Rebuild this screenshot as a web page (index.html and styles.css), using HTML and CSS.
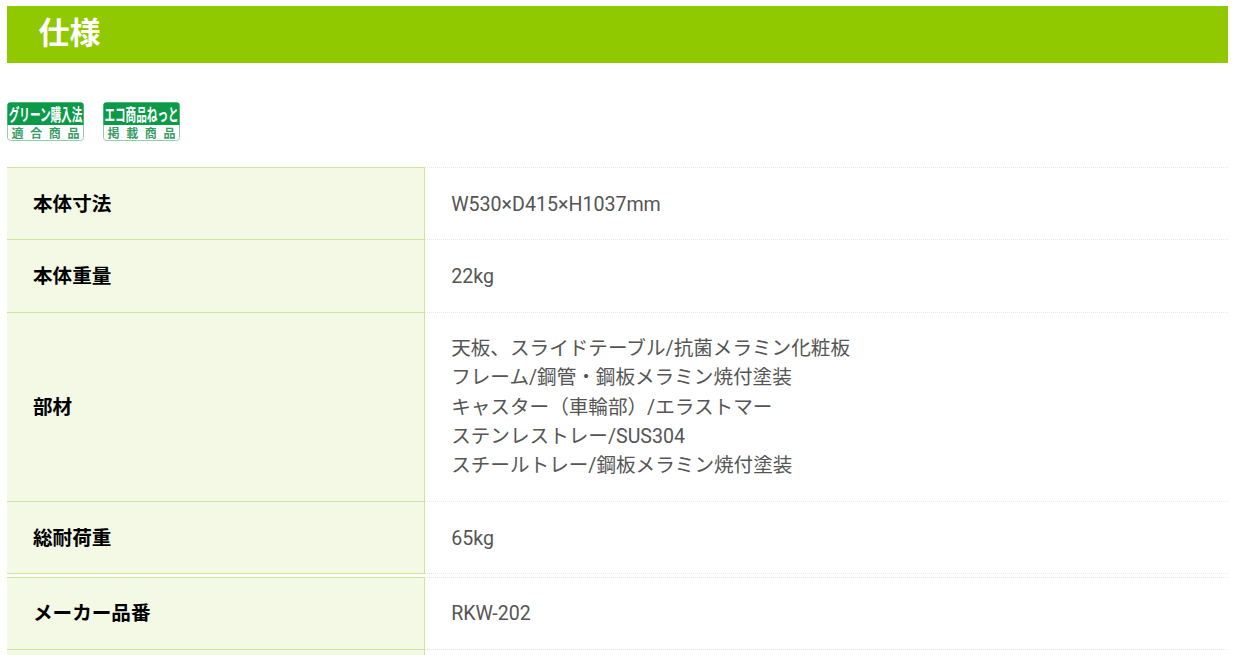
FILE: index.html
```html
<!DOCTYPE html>
<html lang="ja">
<head>
<meta charset="utf-8">
<title>仕様</title>
<link rel="stylesheet" href="styles.css">
</head>
<body>
<h2 class="band">仕様</h2>
<div class="badges">
  <svg class="badge" width="78" height="39" viewBox="0 0 78 39">
    <rect x="0.5" y="0.5" width="76" height="38" rx="3" fill="#fff" stroke="#8fd0a8"/>
    <path d="M3 0.5H74a2.5 2.5 0 0 1 2.5 2.5V23H0.5V3A2.5 2.5 0 0 1 3 0.5Z" fill="#0a9a48"/>
    <text transform="translate(38.5 18.5) scale(1 1.6)" class="b-top">グリーン購入法</text>
    <text x="38.5" y="36" class="b-bot" textLength="68">適合商品</text>
  </svg>
  <svg class="badge" width="78" height="39" viewBox="0 0 78 39">
    <rect x="0.5" y="0.5" width="76" height="38" rx="3" fill="#fff" stroke="#8fd0a8"/>
    <path d="M3 0.5H74a2.5 2.5 0 0 1 2.5 2.5V23H0.5V3A2.5 2.5 0 0 1 3 0.5Z" fill="#0a9a48"/>
    <text transform="translate(38.5 18.5) scale(1 1.6)" class="b-top">エコ商品ねっと</text>
    <text x="38.5" y="36" class="b-bot" textLength="68">掲載商品</text>
  </svg>
</div>
<table class="spec">
  <tr><th>本体寸法</th><td>W530×D415×H1037mm</td></tr>
  <tr><th>本体重量</th><td>22kg</td></tr>
  <tr><th>部材</th><td>天板、スライドテーブル/抗菌メラミン化粧板<br>フレーム/鋼管・鋼板メラミン焼付塗装<br>キャスター（車輪部）/エラストマー<br>ステンレストレー/SUS304<br>スチールトレー/鋼板メラミン焼付塗装</td></tr>
  <tr><th>総耐荷重</th><td>65kg</td></tr>
</table>
<table class="spec spec-next">
  <tr><th>メーカー品番</th><td>RKW-202</td></tr>
  <tr><th>&nbsp;</th><td>&nbsp;</td></tr>
</table>
</body>
</html>
```
FILE: styles.css
```css
html, body { margin: 0; padding: 0; }
html { overflow: hidden; height: 655px; }
body {
  padding: 6px 7px 0;
  background: #fff;
  font-family: Roboto, "Noto Sans CJK JP", sans-serif;
  font-size: 19.6px;
  line-height: 29.3px;
  color: #555;
}
.band {
  margin: 0;
  height: 57px;
  padding-left: 31.5px;
  background: #90c900;
  color: #fff;
  font-family: "Liberation Sans", "Noto Sans CJK JP", sans-serif;
  font-size: 31px;
  font-weight: bold;
  line-height: 56px;
}
.badges {
  display: flex;
  gap: 18px;
  margin-top: 39px;
  height: 39px;
}
.badge { display: block; }
.b-top {
  font-family: "Noto Sans CJK JP", sans-serif;
  font-size: 10.6px;
  font-weight: bold;
  fill: #fff;
  text-anchor: middle;
}
.b-bot {
  font-family: "Noto Sans CJK JP", sans-serif;
  font-size: 12px;
  font-weight: bold;
  fill: #3a9c68;
  text-anchor: middle;
}
.spec {
  width: 100%;
  margin-top: 26px;
  border-collapse: collapse;
  table-layout: fixed;
}
.spec-next { margin-top: 3px; }
.spec th, .spec td {
  padding: 21.5px 26px 20.5px;
  vertical-align: middle;
  text-align: left;
}
.spec-next th, .spec-next td {
  padding: 21px 26px 20.5px;
}
.spec th {
  width: 365px;
  background: #f3f9e4;
  border: 1px solid #cfe59a;
  border-left: 0;
  color: #000;
  font-family: "Liberation Sans", "Noto Sans CJK JP", sans-serif;
  font-weight: bold;
}
.spec td {
  padding-left: 26.2px;
  border-top: 1px dotted #e6e6e6;
  border-bottom: 1px dotted #e6e6e6;
}
```
